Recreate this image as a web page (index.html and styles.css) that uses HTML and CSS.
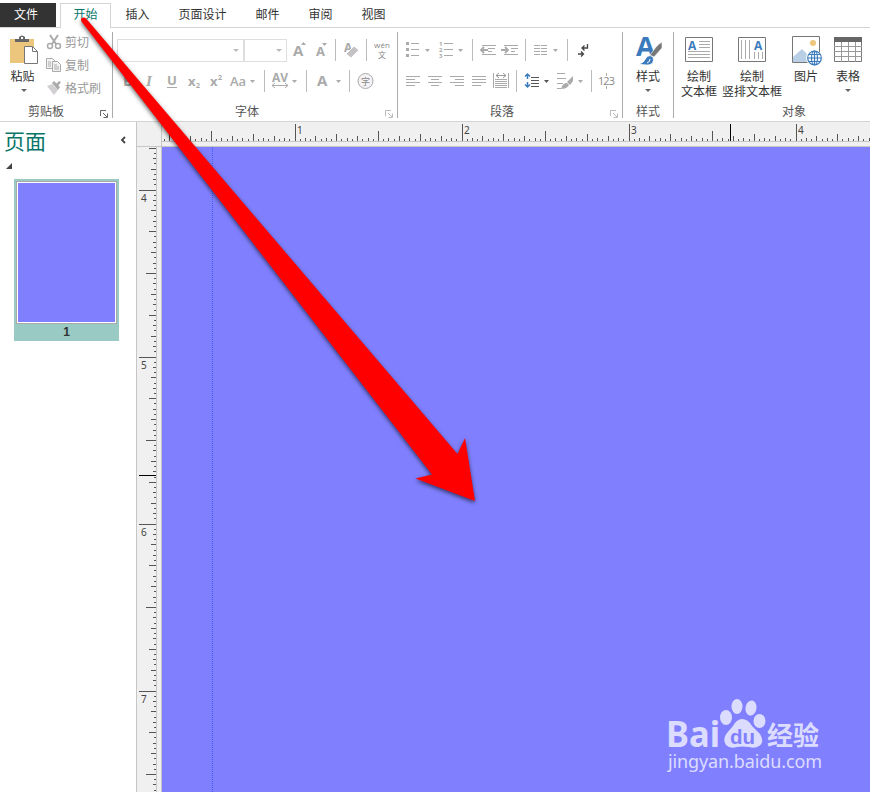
FILE: index.html
```html
<!DOCTYPE html>
<html lang="zh-CN">
<head>
    <meta charset="UTF-8">
    <title>Publisher</title>
    <link rel="stylesheet" href="styles.css">
</head>
<body>
    <div class="app">
        <nav class="tabs">
            <div class="tab file">文件</div>
            <div class="tab active">开始</div>
            <div class="tab">插入</div>
            <div class="tab wide">页面设计</div>
            <div class="tab">邮件</div>
            <div class="tab">审阅</div>
            <div class="tab">视图</div>
        </nav>

        <div class="ribbon">
            <!-- Clipboard -->
            <section class="group clipboard">
                <div class="content">
                    <div class="big paste">
                        <svg width="30" height="33" viewBox="0 0 30 33">
                            <path d="M1 6h24v9h-9v15H1z" fill="#ecc67d"/>
                            <path d="M6 9V6h4V4q3-3 6 0v2h4v3z" fill="#666"/>
                            <path d="M12 4h2v2h-2z" fill="#fff"/>
                            <path d="M15.500 13.500h8l5 5v12h-13z" fill="#fff" stroke="#777"/>
                            <path d="M23.500 13.500v5h5" fill="none" stroke="#777"/>
                        </svg>
                        <span>粘贴</span>
                        <i class="caret"></i>
                    </div>
                    <div class="commands">
                        <div class="command">
                            <svg width="16" height="16" fill="none" stroke="#aaa" stroke-width="1.500">
                                <path d="M4 1l6 9M12 1L6 10" stroke-width="2"/>
                                <circle cx="4" cy="12" r="2.500"/><circle cx="12" cy="12" r="2.500"/>
                            </svg>
                            <span>剪切</span>
                        </div>
                        <div class="command">
                            <svg width="16" height="16" fill="#f5f2f5" stroke="#aaa">
                                <path d="M.5 1.500h6l3 3v7h-9z"/>
                                <path d="M6.500 4.500h5l3 3v7h-8z"/>
                                <path d="M2 5h3M2 7h3M2 9h3M8 8h3M8 10h5M8 12h5"/>
                            </svg>
                            <span>复制</span>
                        </div>
                        <div class="command">
                            <svg width="16" height="16">
                                <path d="M1 6l5-2 6 6-4 5z" fill="#d2cfd2"/>
                                <path d="M6 3l2-2 6 6-2 3zM10 4l3-3 2 1-3 4z" fill="#aaa"/>
                            </svg>
                            <span>格式刷</span>
                        </div>
                    </div>
                </div>
                <footer><span>剪贴板</span><svg class="launcher dark" width="8" height="8"><path d="M.5 6V.5H6M3 3l4 4M7.500 3.500v4h-4" fill="none" stroke="currentColor"/></svg></footer>
            </section>

            <!-- Font -->
            <section class="group font">
                <div class="content rows">
                    <div class="row">
                        <div class="combo family"><i class="caret"></i></div>
                        <div class="combo size"><i class="caret"></i></div>
                        <svg width="24" height="24"><text x="6" y="18" font-size="15">A</text><path d="M14 7l2.500-3 2.500 3z"/></svg>
                        <svg width="24" height="24"><text x="5" y="18" font-size="13">A</text><path d="M11 5h5l-2.500 3z"/></svg>
                        <i class="sep"></i>
                        <svg width="30" height="24"><text x="8" y="14" font-size="12">A</text><path d="M18 8l5 4-8 8-5-4z" fill="#c4c2c4" stroke="#fff"/></svg>
                        <i class="sep"></i>
                        <svg width="29" height="24"><text class="thin" x="7" y="10" font-size="8" textLength="16">wén</text><text class="thin" x="11" y="20" font-size="8">文</text></svg>
                    </div>
                    <div class="row">
                        <svg width="23" height="24"><text x="6" y="17" font-size="14">B</text></svg>
                        <svg width="23" height="24"><text class="serif" x="6" y="17" font-size="15">I</text></svg>
                        <svg width="23" height="24"><text x="4" y="16" font-size="13">U</text><path d="M4 18h10v1H4z"/></svg>
                        <svg width="22" height="24"><text x="2" y="17" font-size="13">x</text><text x="10" y="19" font-size="7">2</text></svg>
                        <svg width="20" height="24"><text x="2" y="17" font-size="13">x</text><text x="10" y="11" font-size="7">2</text></svg>
                        <svg width="36" height="24"><text class="medium" x="2" y="17" font-size="13">Aa</text><path d="M22 11h5l-2.500 3z"/></svg>
                        <i class="sep"></i>
                        <svg width="41" height="24"><text x="7" y="13" font-size="12" textLength="16">AV</text><path d="M7 16.500h16M10 14l-3 2.500 3 2.500M20 14l3 2.500-3 2.500" fill="none" stroke="#aaa"/><path d="M27 11h5l-2.500 3z"/></svg>
                        <i class="sep"></i>
                        <svg width="42" height="24"><text x="10" y="17" font-size="15">A</text><path d="M29 11h5l-2.500 3z"/></svg>
                        <i class="sep"></i>
                        <svg width="34" height="24"><circle cx="15.500" cy="12" r="7.500" fill="#f5f2f5" stroke="#aaa"/><text class="thin" x="11" y="15.500" font-size="9">字</text></svg>
                    </div>
                </div>
                <footer><span>字体</span><svg class="launcher" width="8" height="8"><path d="M.5 6V.5H6M3 3l4 4M7.500 3.500v4h-4" fill="none" stroke="currentColor"/></svg></footer>
            </section>

            <!-- Paragraph -->
            <section class="group paragraph">
                <div class="content rows">
                    <div class="row">
                        <svg width="33" height="24"><path d="M8 5h8v1H8zM8 11h8v1H8zM8 17h8v1H8zM3 4h3v3H3zM3 10h3v3H3zM3 16h3v3H3zM22 11h5l-2.500 3z"/></svg>
                        <svg width="36" height="24"><path d="M8 5h9v1H8zM8 11h9v1H8zM8 17h9v1H8zM22 11h5l-2.500 3z"/><text x="3" y="8" font-size="6">1</text><text x="3" y="14" font-size="6">2</text><text x="3" y="20" font-size="6">3</text></svg>
                        <i class="sep"></i>
                        <svg width="26" height="24"><path d="M9 7h14v1H9zM15 10h7v1h-7zM15 13h4v1h-4zM9 16h14v1H9z"/><path d="M15 12H8M11 9l-3 3 3 3" fill="none" stroke="#aaa" stroke-width="1.800"/></svg>
                        <svg width="26" height="24"><path d="M5 7h14v1H5zM12 10h7v1h-7zM12 13h4v1h-4zM5 16h14v1H5z"/><path d="M2 12h7M6 9l3 3-3 3" fill="none" stroke="#aaa" stroke-width="1.800"/></svg>
                        <i class="sep"></i>
                        <svg width="41" height="24"><path d="M8 7h6v1H8zM15 7h6v1h-6zM8 10h6v1H8zM15 10h6v1h-6zM8 13h6v1H8zM15 13h6v1h-6zM8 16h6v1H8zM15 16h6v1h-6zM27 11h5l-2.500 3z"/></svg>
                        <i class="sep"></i>
                        <svg width="30" height="24"><path d="M19.500 6v4H14M16.500 7.500L14 10l2.500 2.500M10 16h5M13 13.500l2.500 2.500-2.500 2.500" fill="none" stroke="#444" stroke-width="1.300"/></svg>
                    </div>
                    <div class="row">
                        <svg width="22" height="24"><path d="M3 7h14v1H3zM3 10h9v1H3zM3 13h14v1H3zM3 16h9v1H3z"/></svg>
                        <svg width="22" height="24"><path d="M3 7h14v1H3zM6 10h8v1H6zM3 13h14v1H3zM6 16h8v1H6z"/></svg>
                        <svg width="22" height="24"><path d="M3 7h14v1H3zM8 10h9v1H8zM3 13h14v1H3zM8 16h9v1H8z"/></svg>
                        <svg width="22" height="24"><path d="M3 7h14v1H3zM3 10h14v1H3zM3 13h14v1H3zM3 16h9v1H3z"/></svg>
                        <svg width="25" height="24"><path d="M2 4h1v15H2zM17 4h1v15h-1zM4 10h12v1H4zM4 12h12v1H4zM4 14h12v1H4zM4 16h12v1H4zM4 18h12v1H4z"/><path d="M5 6.500h10M8 4L5 6.500 8 9M12 4l3 2.500L12 9" fill="none" stroke="#999"/></svg>
                        <i class="sep"></i>
                        <svg width="35" height="24"><path d="M10.500 5v5M10.500 13v5M8 7.500L10.500 5 13 7.500M8 15.500l2.500 2.500 2.500-2.500" fill="none" stroke="#3b7bbd" stroke-width="1.500"/><path d="M14 8h8v1h-8zM14 11h8v1h-8zM14 14h8v1h-8zM14 17h8v1h-8zM27 11h5l-2.500 3z" fill="#555"/></svg>
                        <svg width="39" height="24"><path d="M5 4h8v1H5zM5 9h9v1H5zM5 14h6v1H5zM5 19h4v1H5zM9 20q2-7 6-6l2 2q-2 4-8 4zM15 13l6-6v5l-3 4zM26 11h5l-2.500 3z"/></svg>
                        <i class="sep"></i>
                        <svg width="30" height="24"><text class="thin" x="6" y="16" font-size="11" textLength="17">123</text><path d="M14 4h1v3h-1zM14 17h1v3h-1z"/></svg>
                    </div>
                </div>
                <footer><span>段落</span><svg class="launcher" width="8" height="8"><path d="M.5 6V.5H6M3 3l4 4M7.500 3.500v4h-4" fill="none" stroke="currentColor"/></svg></footer>
            </section>

            <!-- Styles -->
            <section class="group styles">
                <div class="content">
                    <div class="big">
                        <svg width="32" height="33" viewBox="0 0 32 33">
                            <text class="styleA" x="4" y="23" font-size="27" textLength="19" lengthAdjust="spacingAndGlyphs">A</text>
                            <path d="M7 31q5-1 7-6 3-4 7-1 2 7-5 8-4 0-9-1z" fill="#3b7bbd" stroke="#fff" stroke-width=".7"/>
                            <path d="M15 30q3-1 3-4" stroke="#fff" fill="none"/>
                            <path d="M18 22l6-8q4-4 6-5v6l-8 9z" fill="#777" stroke="#fff" stroke-width=".6"/>
                        </svg>
                        <span>样式</span>
                        <i class="caret"></i>
                    </div>
                </div>
                <footer><span>样式</span></footer>
            </section>

            <!-- Objects -->
            <section class="group objects">
                <div class="content">
                    <div class="big textbox">
                        <svg width="30" height="33" viewBox="0 0 30 33">
                            <path d="M1.500 4.500h27v24h-27z" fill="#fff" stroke="#777"/>
                            <text class="boxA" x="4" y="17" font-size="12">A</text>
                            <path d="M15 8.500h11M15 11.500h11M15 14.500h11M4 18.500h22M4 21.500h22M4 24.500h22" stroke="#aaa"/>
                        </svg>
                        <span>绘制<br>文本框</span>
                    </div>
                    <div class="big vertical">
                        <svg width="30" height="33" viewBox="0 0 30 33">
                            <path d="M1.500 4.500h27v24h-27z" fill="#fff" stroke="#777"/>
                            <text class="boxA" x="17" y="17" font-size="12">A</text>
                            <path d="M4.500 7v19M8.500 7v19M12.500 7v19M17.500 19v7M21.500 19v7M25.500 19v7" stroke="#aaa"/>
                        </svg>
                        <span>绘制<br>竖排文本框</span>
                    </div>
                    <div class="big picture">
                        <svg width="31" height="33" viewBox="0 0 31 33">
                            <path d="M1.500 3.500h27v26h-27z" fill="#fff" stroke="#777"/>
                            <circle cx="22" cy="10" r="3" fill="#ecc67d"/>
                            <path d="M2 29v-5l9-8 9 9v4z" fill="#b9cfe6"/>
                            <circle cx="23" cy="25" r="8" fill="#fff"/>
                            <g fill="none" stroke="#3b7bbd" stroke-width="1.200">
                                <circle cx="23.500" cy="25" r="6.800"/><ellipse cx="23.500" cy="25" rx="3" ry="6.800"/>
                                <path d="M23.500 18v14M17 25h13M18 21.500h11M18 28.500h11"/>
                            </g>
                        </svg>
                        <span>图片</span>
                    </div>
                    <div class="big table">
                        <svg width="30" height="33" viewBox="0 0 30 33">
                            <path d="M1.500 4.500h27v24h-27z" fill="#fff" stroke="#777"/>
                            <path d="M1 4h28v5H1z" fill="#666"/>
                            <path d="M1 13.500h28M1 18.500h28M1 23.500h28M8.500 9v20M15.500 9v20M22.500 9v20" stroke="#999"/>
                        </svg>
                        <span>表格</span>
                        <i class="caret"></i>
                    </div>
                </div>
                <footer><span>对象</span></footer>
            </section>
        </div>

        <div class="workspace">
            <aside class="pages">
                <header>
                    <h1>页面</h1>
                    <svg width="6" height="8"><path d="M5 1L2 4l3 3" fill="none" stroke="#444" stroke-width="1.800"/></svg>
                </header>
                <svg class="expand" width="6" height="6"><path d="M6 0v6H0z" fill="#444"/></svg>
                <div class="thumb">
                    <div class="sheet"></div>
                    <span>1</span>
                </div>
            </aside>
            <main class="editor">
                <div class="corner"></div>
                <svg class="ruler-h" id="rulerH" width="708" height="25"></svg>
                <svg class="ruler-v" id="rulerV" width="25" height="645"></svg>
                <div class="canvas">
                    <div class="guide"></div>
                    <svg class="watermark" width="160" height="80" viewBox="664 696 160 80">
                        <text class="logo" x="666" y="746.500" font-size="35" textLength="54" lengthAdjust="spacingAndGlyphs">Bai</text>
                        <ellipse cx="726" cy="717.500" rx="6" ry="7.500"/>
                        <ellipse cx="737" cy="706.500" rx="5.500" ry="7.500"/>
                        <ellipse cx="751" cy="708" rx="5.500" ry="7.500" transform="rotate(10 751 708)"/>
                        <ellipse cx="759.500" cy="721" rx="6" ry="7"/>
                        <path d="M742 719q6 0 10 7l8 8q5 8-1 12-4 3-10 1-7-1-12 0-7 2-11-2-4-6 1-12l6-7q4-7 9-7z"/>
                        <text class="du" x="730" y="744" font-size="20" textLength="25" lengthAdjust="spacingAndGlyphs">du</text>
                        <text class="jingyan" x="767" y="745" font-size="26">经验</text>
                        <text class="url" x="668" y="768" font-size="18" textLength="154">jingyan.baidu.com</text>
                    </svg>
                </div>
            </main>
        </div>

        <svg class="arrow" width="870" height="792">
            <path d="M81.500 21.500Q80 18 83.500 17.500 85 17 86.500 19L457.500 454 465 438 475 501 415.500 478.500 432 474.500z" fill="#f00"/>
        </svg>
    </div>
    <script src="rulers.js"></script>
</body>
</html>
```
FILE: styles.css
```css
* {
    box-sizing: border-box;
}
body {
    margin: 0;
    background: #fff;
    color: #333;
    font-family: "Liberation Sans", "Noto Sans CJK SC", sans-serif;
    font-size: 12px;
}
.app {
    position: relative;
    width: 870px;
    height: 792px;
    overflow: hidden;
    display: flex;
    flex-direction: column;
}
svg {
    display: block;
    flex: none;
    overflow: visible;
}
/* Tabs */
.tabs {
    height: 28px;
    padding-top: 3px;
    display: flex;
    border-bottom: 1px solid #d4d4d4;
}
.tab {
    width: 53px;
    height: 24px;
    line-height: 24px;
    text-align: center;
}
.tab.wide {
    width: 77px;
}
.tab.file {
    width: 56px;
    padding-right: 4px;
    background: #333;
    color: #fff;
}
.tab.active {
    width: 51px;
    height: 25px;
    margin: 0 0 0 4px;
    border: 1px solid #d4d4d4;
    border-bottom: 0;
    background: #fff;
    line-height: 22px;
    color: #077568;
}
/* Ribbon */
.ribbon {
    height: 94px;
    padding-top: 4px;
    display: flex;
    border-bottom: 1px solid #d4d4d4;
}
.group {
    height: 86px;
    border-right: 1px solid #ababab;
    display: flex;
    flex-direction: column;
}
.clipboard { width: 113px; }
.font { width: 285px; }
.paragraph { width: 225px; }
.styles { width: 51px; }
.objects { width: 196px; border: 0; }
.content {
    height: 72px;
    display: flex;
}
.rows {
    flex-direction: column;
    gap: 7px;
    padding-top: 6px;
}
.font .rows { padding-left: 4px; }
.paragraph .rows { padding-left: 5px; }
.row {
    height: 24px;
    display: flex;
    align-items: center;
}
.row svg {
    fill: #aaa;
}
.row text {
    font-family: "Open Sans", "Noto Sans CJK SC", sans-serif;
    font-weight: bold;
}
.row .medium {
    font-weight: 600;
}
.row .thin {
    font-weight: normal;
    fill: #888;
}
.row .serif {
    font-family: "Liberation Serif", serif;
    font-style: italic;
}
.sep {
    width: 1px;
    height: 22px;
    background: #bbb;
}
.combo {
    height: 23px;
    border: 1px solid #dedede;
    display: flex;
    align-items: center;
    justify-content: flex-end;
    padding-right: 4px;
}
.family { width: 127px; }
.size { width: 43px; }
.caret {
    border: 3px solid transparent;
    border-top-color: #666;
    border-bottom: 0;
}
.combo .caret {
    border-top-color: #bbb;
}
footer {
    height: 14px;
    line-height: 17px;
    display: flex;
    justify-content: center;
    position: relative;
    color: #555;
}
.clipboard footer { padding-right: 20px; }
.font footer { padding-right: 16px; }
.paragraph footer { padding-right: 16px; }
.objects footer { padding-left: 44px; }
.launcher {
    position: absolute;
    right: 4px;
    top: 6px;
    color: #bbb;
}
.launcher.dark {
    color: #666;
}
/* Big buttons */
.big {
    display: flex;
    flex-direction: column;
    align-items: center;
    width: 52px;
    padding-top: 1px;
    line-height: 15px;
    text-align: center;
    white-space: nowrap;
}
.big span {
    margin-top: 4px;
}
.big .caret {
    margin-top: 4px;
}
.paste {
    width: 46px;
    padding-left: 2px;
}
.paste span {
    margin-right: 3px;
}
.paste .caret {
    margin-right: 1px;
}
.textbox { width: 50px; }
.vertical { width: 56px; }
.picture { width: 52px; }
.table { width: 32px; }
.command {
    height: 23px;
    display: flex;
    align-items: center;
    gap: 3px;
    color: #999;
}
.commands {
    margin-top: -2px;
}
/* Page list */
.workspace {
    flex: 1;
    display: flex;
}
.pages {
    width: 136px;
    flex: none;
}
.pages header {
    height: 39px;
    padding: 0 10px 3px 4px;
    display: flex;
    align-items: center;
    justify-content: space-between;
}
h1 {
    margin: -1px 0 0;
    font-size: 21px;
    font-weight: normal;
    color: #077568;
}
.expand {
    margin: 2px 0 0 6px;
}
.thumb {
    width: 105px;
    height: 162px;
    margin: 10px 0 0 14px;
    padding: 2px;
    background: #99cbc4;
    text-align: center;
    font-weight: bold;
    line-height: 17px;
}
.sheet {
    height: 143px;
    border: 1px solid #aaa;
    box-shadow: inset 0 0 0 1px #fff;
    background: #8080ff;
}
/* Rulers and page */
.editor {
    width: 734px;
    display: grid;
    grid-template-columns: 26px 708px;
    grid-template-rows: 25px 645px;
    background: #f0f0f0;
}
.corner {
    border: 1px solid #c6c6c6;
    border-top: 0;
}
.ruler-h {
    border-bottom: 1px solid #c6c6c6;
}
.ruler-v {
    width: 26px;
    border-left: 1px solid #c6c6c6;
    border-right: 1px solid #c6c6c6;
}
.ruler-h text, .ruler-v text {
    font-family: "Noto Sans", sans-serif;
    font-size: 10px;
    fill: #444;
}
.canvas {
    position: relative;
    background: #8080ff;
}
.guide {
    width: 1px;
    height: 645px;
    margin-left: 50px;
    background: repeating-linear-gradient(#3f5cff 0 1px, #8080ff 1px 2px);
}
.styleA, .boxA {
    font-family: "Open Sans", sans-serif;
    font-weight: bold;
    fill: #3b7bbd;
}
.watermark {
    position: absolute;
    left: 502px;
    top: 549px;
    fill: #dcdcff;
}
.logo {
    font-family: "Noto Sans", sans-serif;
    font-weight: bold;
}
.du {
    fill: #8080ff;
    font-weight: bold;
}
.jingyan {
    font-family: "Noto Sans CJK SC", sans-serif;
    font-weight: bold;
}
.url {
    font-family: "Noto Sans", sans-serif;
}
.arrow {
    position: absolute;
    left: 0;
    top: 0;
    pointer-events: none;
    filter: drop-shadow(0 2px 2px rgba(0, 0, 0, 0.6));
}
```
FILE: rulers.js
```js
const INCH = 167;

// tick length for n thirty-seconds of an inch
function tickLength(n) {
    if (n % 32 === 0) return 17;
    if (n % 16 === 0) return 10;
    if (n % 8 === 0) return 7;
    if (n % 4 === 0) return 5;
    if (n % 2 === 0) return 3;
    return 2;
}

function drawRuler(id, start, first, size, cursor, vertical) {
    let out = '';
    for (let n = -32; n < 32 * 5; n++) {
        const pos = start + Math.floor(n * INCH / 32);
        if (pos < 1 || pos >= size) continue;
        const len = tickLength(n);
        out += vertical
            ? `<rect x="${19 - len}" y="${pos}" width="${len}" height="1" fill="#555"/>`
            : `<rect x="${pos}" y="${19 - len}" width="1" height="${len}" fill="#555"/>`;
        if (n % 32 === 0) {
            const label = first + n / 32;
            out += vertical
                ? `<text x="4" y="${pos + 12}">${label}</text>`
                : `<text x="${pos + 2}" y="12">${label}</text>`;
        }
    }
    // current pointer position
    out += vertical
        ? `<rect x="2" y="${cursor}" width="17" height="1"/><rect x="19" width="1" height="${size}" fill="#c6c6c6"/>`
        : `<rect x="${cursor}" y="2" width="1" height="17"/><rect y="19" width="${size}" height="1" fill="#c6c6c6"/>`;
    document.getElementById(id).innerHTML = out;
}

drawRuler('rulerH', 133, 1, 708, 568, false);
drawRuler('rulerV', 43, 4, 645, 328, true);
```
